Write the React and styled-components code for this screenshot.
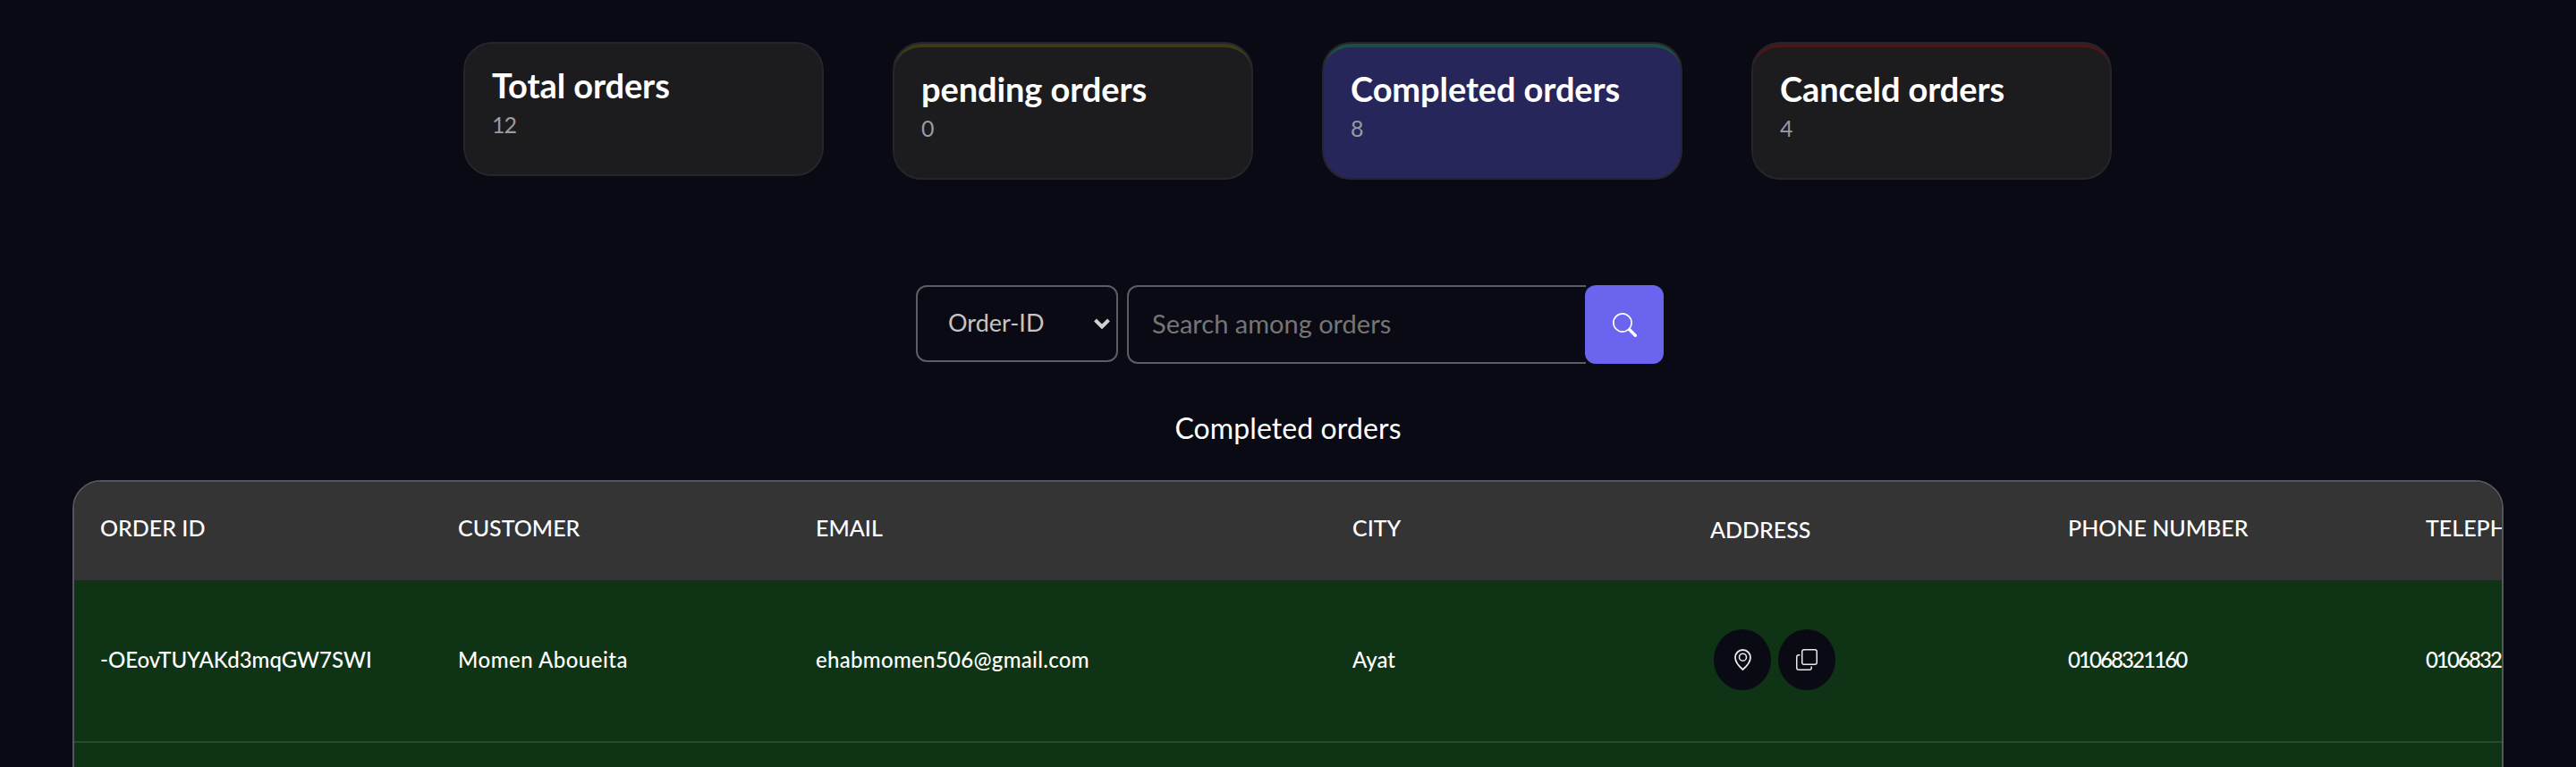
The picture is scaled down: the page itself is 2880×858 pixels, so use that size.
import styled, { createGlobalStyle } from "styled-components";
import { BsCopy, BsSearch } from "react-icons/bs";

const GlobalStyle = createGlobalStyle`
  html, body {
    margin: 0;
    height: 100%;
    overflow: hidden;
    background-color: #0a0a14;
  }
  * {
    box-sizing: border-box;
  }
`;

const stats = [
  { title: "Total orders", count: 12 },
  { title: "pending orders", count: 0, strip: "#3d3a18" },
  { title: "Completed orders", count: 8, strip: "#1f4d42", active: true },
  { title: "Canceld orders", count: 4, strip: "#4a1618" },
];

const columns = [
  { label: "ORDER ID", width: 400 },
  { label: "CUSTOMER", width: 400 },
  { label: "EMAIL", width: 600 },
  { label: "CITY", width: 400 },
  { label: "ADDRESS", width: 400, lower: true },
  { label: "PHONE NUMBER", width: 400 },
  { label: "TELEPHONE", width: 400 },
];

const PinIcon = () => (
  <svg width="19" height="24" viewBox="0 0 19 24" fill="none" stroke="currentColor" strokeWidth="1.8">
    <path d="M9.5 1a8.5 8.5 0 0 1 8.5 8.5c0 4.5-5 10.5-8.5 13.5C6 20 1 14 1 9.5A8.5 8.5 0 0 1 9.5 1z" strokeLinejoin="round" />
    <circle cx="9.5" cy="9.2" r="4" strokeWidth="1.6" />
  </svg>
);

const App = () => {
  return (
    <Page>
      <GlobalStyle />
      <StatsRow>
        {stats.map((stat) => (
          <StatCard key={stat.title}>
            <StatBody $strip={stat.strip} $active={stat.active}>
              <StatTitle>{stat.title}</StatTitle>
              <StatCount>{stat.count}</StatCount>
            </StatBody>
          </StatCard>
        ))}
      </StatsRow>

      <SearchRow>
        <SelectWrap>
          <FilterSelect defaultValue="Order-ID">
            <option>Order-ID</option>
          </FilterSelect>
          <Chevron width="18" height="12" viewBox="0 0 18 12" fill="none" stroke="currentColor" strokeWidth="4">
            <path d="M1.5 2 9 9.5 16.5 2" />
          </Chevron>
        </SelectWrap>
        <SearchBox>
          <SearchInput placeholder="Search among orders" />
          <SearchButton>
            <BsSearch size={27} />
          </SearchButton>
        </SearchBox>
      </SearchRow>

      <SectionTitle>Completed orders</SectionTitle>

      <TableFrame>
        <OrdersTable>
          <colgroup>
            {columns.map((col) => (
              <col key={col.label} width={col.width} />
            ))}
          </colgroup>
          <thead>
            <tr>
              {columns.map((col) => (
                <HeadCell key={col.label} $lower={col.lower}>
                  {col.label}
                </HeadCell>
              ))}
            </tr>
          </thead>
          <tbody>
            <OrderRow>
              <BodyCell>-OEovTUYAKd3mqGW7SWI</BodyCell>
              <BodyCell $spacing="0.5px">Momen Aboueita</BodyCell>
              <BodyCell $spacing="0.3px">ehabmomen506@gmail.com</BodyCell>
              <BodyCell>Ayat</BodyCell>
              <BodyCell>
                <AddressActions>
                  <RoundButton>
                    <PinIcon />
                  </RoundButton>
                  <RoundButton>
                    <BsCopy size={24} />
                  </RoundButton>
                </AddressActions>
              </BodyCell>
              <BodyCell $spacing="-1.9px">01068321160</BodyCell>
              <BodyCell $spacing="-1.9px">01068321160</BodyCell>
            </OrderRow>
            <OrderRow>
              <BodyCell colSpan={7} />
            </OrderRow>
          </tbody>
        </OrdersTable>
      </TableFrame>
    </Page>
  );
};

const Page = styled.div`
  display: flex;
  flex-direction: column;
  align-items: center;
  padding: 47px 81px 0;
  font-family: "Lato", "Liberation Sans", sans-serif;
  color: #fff;
`;

const StatsRow = styled.div`
  display: flex;
  align-items: flex-start;
  gap: 77px;
  margin-right: 1px;
`;

const StatCard = styled.div`
  width: 403px;
  border: 2px solid #25252d;
  border-radius: 32px;
  background-color: #25252d;
`;

const StatBody = styled.div`
  height: ${({ $strip }) => ($strip ? 150 : 146)}px;
  padding: 23px 30px 0;
  border-top: ${({ $strip }) => ($strip ? `4px solid ${$strip}` : "none")};
  border-radius: 30px;
  background-color: ${({ $active }) => ($active ? "#27265a" : "#1c1c1e")};
`;

const StatTitle = styled.h2`
  margin: 0;
  font-size: 38px;
  line-height: 46px;
  font-weight: 700;
  letter-spacing: -0.1px;
`;

const StatCount = styled.div`
  margin-top: 6px;
  font-size: 25px;
  line-height: 30px;
  letter-spacing: -1px;
  color: #9a9aa2;
`;

const SearchRow = styled.div`
  display: flex;
  align-items: flex-start;
  gap: 10px;
  margin-top: 118px;
  margin-left: 4px;
`;

const SelectWrap = styled.div`
  position: relative;
  width: 226px;
  height: 86px;
`;

const FilterSelect = styled.select`
  appearance: none;
  width: 100%;
  height: 100%;
  padding: 0 0 4px 34px;
  border: 2px solid #5c5c64;
  border-radius: 12px;
  background-color: transparent;
  color: #c4c4c4;
  font-family: inherit;
  font-size: 27px;
  outline: none;
`;

const Chevron = styled.svg`
  position: absolute;
  top: 37px;
  right: 9px;
  color: #d0d0d0;
  pointer-events: none;
`;

const SearchBox = styled.div`
  display: flex;
  width: 600px;
  height: 88px;
`;

const SearchInput = styled.input`
  flex: 1;
  min-width: 0;
  padding: 0 0 4px 26px;
  border: 2px solid #5c5c64;
  border-right: none;
  border-radius: 12px 0 0 12px;
  background-color: transparent;
  color: #fff;
  font-family: inherit;
  font-size: 29px;
  outline: none;

  &::placeholder {
    color: #757575;
  }
`;

const SearchButton = styled.button`
  display: flex;
  align-items: center;
  justify-content: center;
  width: 88px;
  margin-left: -1px;
  border: none;
  border-radius: 12px;
  background-color: #6a64ee;
  color: #fff;
`;

const SectionTitle = styled.h3`
  margin: 52px 0 0;
  font-size: 32px;
  line-height: 40px;
  font-weight: 400;
  letter-spacing: 0.1px;
`;

const TableFrame = styled.div`
  width: 100%;
  margin-top: 38px;
  border: 2px solid #55555c;
  border-radius: 32px 32px 0 0;
  overflow: hidden;
`;

const OrdersTable = styled.table`
  width: 2800px;
  table-layout: fixed;
  border-collapse: collapse;
`;

const HeadCell = styled.th`
  height: 110px;
  padding: ${({ $lower }) => ($lower ? "0 29px 4px" : "0 29px 8px")};
  background-color: #343434;
  color: #fff;
  font-size: 25px;
  font-weight: 500;
  text-align: left;
  white-space: nowrap;
`;

const OrderRow = styled.tr`
  height: 181px;
  background-color: #0f3315;
  border-bottom: 2px solid #284a2d;
`;

const BodyCell = styled.td`
  padding: 0 29px 3px;
  color: #fff;
  font-size: 24px;
  font-weight: 500;
  white-space: nowrap;
  letter-spacing: ${({ $spacing }) => $spacing || "normal"};
`;

const AddressActions = styled.div`
  display: flex;
  gap: 8px;
  margin-left: 4px;
`;

const RoundButton = styled.button`
  display: flex;
  align-items: center;
  justify-content: center;
  width: 64px;
  height: 68px;
  padding: 0;
  border: none;
  border-radius: 50%;
  background-color: #0a0a14;
  color: #e8e8e8;
`;

export default App;
